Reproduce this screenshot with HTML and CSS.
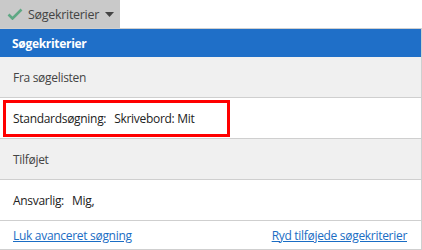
FILE: index.html
```html
<!DOCTYPE html>
<html>
<head>
<meta charset="utf-8">
<link rel="stylesheet" href="styles.css">
</head>
<body>
<div class="toolbar">
  <div class="tbtn">
    <svg class="check" width="16" height="12" viewBox="0 0 16 12"><polyline points="1.5,6.5 5.5,10.5 14.5,1.5" fill="none" stroke="#5fa884" stroke-width="2.6"/></svg>
    <span class="tlabel">Søgekriterier</span>
    <svg class="caret" width="9" height="5" viewBox="0 0 9 5"><polygon points="0,0 9,0 4.5,5" fill="#444"/></svg>
  </div>
</div>
<div class="panel">
  <div class="head">Søgekriterier</div>
  <div class="sect">Fra søgelisten</div>
  <div class="row"><span class="hl"><span class="k">Standardsøgning:</span>Skrivebord: Mit</span></div>
  <div class="sect">Tilføjet</div>
  <div class="row pad"><span class="k">Ansvarlig:</span>Mig,</div>
  <div class="links"><a href="#">Luk avanceret søgning</a><a href="#">Ryd tilføjede søgekriterier</a></div>
</div>
</body>
</html>
```
FILE: styles.css
```css
html, body { margin: 0; padding: 0; background: #fff; }
body { font-family: "Open Sans", "Noto Sans", sans-serif; font-size: 12px; letter-spacing: -0.3px; color: #333; width: 422px; }
.toolbar { height: 28px; display: flex; }
.tbtn { width: 120px; height: 28px; background: #c9c9c9; display: flex; align-items: center; box-sizing: border-box; padding-left: 7px; }
.check { display: block; margin-right: 5px; }
.tlabel { color: #444; font-size: 12.5px; }
.caret { display: block; margin-left: 6px; }
.panel { border-top: 1px solid #cfcfcf; border-right: 1px solid #cfcfcf; border-bottom: 1px solid #cfcfcf; box-sizing: border-box; width: 422px; }
.head { height: 28px; background: #1f6fc8; color: #fff; font-weight: 700; display: flex; align-items: center; padding-left: 12px; }
.sect { height: 40px; background: #f0f0f0; border-bottom: 1px solid #cfcfcf; display: flex; align-items: center; padding-left: 13px; color: #444; }
.row { height: 40px; border-bottom: 1px solid #cfcfcf; display: flex; align-items: center; color: #222; }
.row.pad { padding-left: 13px; }
.hl { border: 3px solid #f00; height: 37px; box-sizing: border-box; width: 227px; margin-left: 3px; margin-top: 1px; display: flex; align-items: center; padding-left: 7px; }
.k { margin-right: 8px; }
.links { height: 28px; display: flex; justify-content: space-between; align-items: center; padding: 0 14px 0 13px; }
.links a { color: #1a6dc4; text-decoration: underline; }
```
